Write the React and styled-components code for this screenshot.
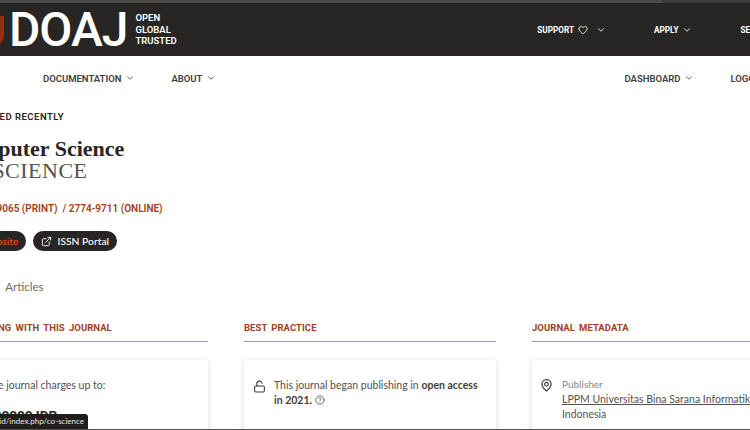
import React from "react";
import styled, { createGlobalStyle } from "styled-components";
import { ChevronDown, Clock, Coins, ExternalLink, Heart, LockOpen, CircleHelp } from "lucide-react";

const GlobalStyle = createGlobalStyle`
  html, body {
    margin: 0;
    height: 100%;
    overflow: hidden;
    background: #fff;
  }
  body {
    font-family: Lato, "Noto Sans", sans-serif;
    color: #282624;
  }
`;

const Screen = styled.div`
  position: relative;
  width: 750px;
  height: 430px;
  overflow: hidden;
  border-bottom: 1px solid #55524f;
  box-sizing: border-box;
`;

const Page = styled.div`
  width: 1000px;
  margin-left: -90px;
`;

const Strip = styled.div`
  height: 3px;
  background: linear-gradient(to right, #4c4a48 752px, #3b3937 752px);
`;

const TopBar = styled.header`
  height: 53px;
  background: #282624;
  display: flex;
  align-items: center;
  padding-left: 72px;
  color: #fff;
`;

const Shield = styled.span`
  width: 22px;
  height: 30px;
  margin-top: 2px;
  background: #982e0a;
  border-radius: 0 0 11px 11px;
  margin-right: 5px;
`;

const Wordmark = styled.span`
  font-family: Roboto, sans-serif;
  font-size: 48px;
  font-weight: 500;
  line-height: 1;
  letter-spacing: -1px;
`;

const Tagline = styled.span`
  margin-left: 8px;
  font-family: Roboto, sans-serif;
  font-size: 9.5px;
  font-weight: 600;
  line-height: 11.5px;
  white-space: pre-line;
`;

const TopLinks = styled.nav`
  margin-left: auto;
  display: flex;
  align-items: center;
  gap: 48px;
  margin-right: 138px;
`;

const TopLink = styled.span`
  display: flex;
  align-items: center;
  gap: 4px;
  font-family: Roboto, sans-serif;
  font-size: 8.2px;
  font-weight: 700;
`;

const TopChevron = styled(ChevronDown)`
  margin-left: ${(p) => p.$offset || 0}px;
`;

const MainNav = styled.nav`
  height: 44px;
  display: flex;
  align-items: center;
  padding-left: 133px;
  color: #3f3d3b;
`;

const NavLink = styled.span`
  display: flex;
  align-items: center;
  gap: 4px;
  font-family: Roboto, sans-serif;
  font-size: 9.5px;
  font-weight: 600;
  margin-right: ${(p) => p.$gap}px;
`;

const Intro = styled.section`
  padding: 11px 0 0 43px;
`;

const Updated = styled.div`
  display: flex;
  align-items: center;
  gap: 4px;
  font-family: Roboto, sans-serif;
  font-size: 9.5px;
  font-weight: 600;
  letter-spacing: 0.5px;
`;

const Title = styled.h1`
  margin: 16px 0 0;
  font-family: "Liberation Serif", serif;
  font-size: 22px;
  font-weight: 700;
  line-height: 22px;
`;

const Subtitle = styled.div`
  font-family: "Liberation Serif", serif;
  font-size: 22px;
  line-height: 22px;
  letter-spacing: 0.5px;
  color: #55524f;
`;

const Issn = styled.div`
  margin: 21px 0 0 17px;
  font-family: Roboto, sans-serif;
  font-size: 10px;
  font-weight: 600;
  color: #a0401c;
`;

const Buttons = styled.div`
  display: flex;
  gap: 7px;
  margin: 17px 0 0 4px;
`;

const Pill = styled.span`
  display: flex;
  align-items: center;
  gap: 5px;
  height: 20px;
  padding: 0 8px;
  border-radius: 10px;
  background: #282624;
  color: ${(p) => p.$color};
  font-size: 10.3px;
  font-weight: 500;
`;

const Tabs = styled.div`
  display: flex;
  gap: 21px;
  margin-top: 29px;
  font-size: 11.5px;
  color: #6e6b68;
`;

const Columns = styled.div`
  display: grid;
  grid-template-columns: repeat(3, 252px);
  gap: 36px;
  margin: 29px 0 0 3px;
`;

const SectionHead = styled.h2`
  margin: 0;
  padding-bottom: 8px;
  border-bottom: 1px solid #c98e78;
  font-family: Roboto, sans-serif;
  font-size: 9.5px;
  font-weight: 700;
  letter-spacing: 0.05px;
  word-spacing: 1.8px;
  color: #a0401c;
`;

const Card = styled.div`
  margin-top: 18px;
  height: 100px;
  padding: ${(p) => p.$top || 18}px 9px 0;
  border-radius: 3px;
  background: #fff;
  box-shadow: 0 1px 6px rgba(0, 0, 0, 0.14);
  display: flex;
  gap: 9px;
  font-size: 10.5px;
  line-height: 15px;
  color: #55524f;
`;

const Body = styled.div`
  strong {
    font-weight: 700;
    color: #3f3d3b;
  }
  svg {
    vertical-align: -1px;
  }
`;

const IconSlot = styled.span`
  width: 12px;
  flex: none;
  padding-top: 2px;
  color: #3f3d3b;
`;

const Label = styled.div`
  font-size: 10px;
  color: #8a8784;
`;

const Publisher = styled.span`
  display: block;
  white-space: nowrap;
  text-decoration: underline;
`;

const Price = styled.div`
  margin-top: 15px;
  font-family: Roboto, sans-serif;
  font-size: 13.5px;
  font-weight: 700;
  color: #282624;
`;

const StatusTip = styled.div`
  position: absolute;
  left: 0;
  bottom: 0;
  width: 88px;
  height: 15px;
  direction: rtl;
  overflow: hidden;
  padding-right: 4px;
  box-sizing: border-box;
  white-space: nowrap;
  background: #1f1e1d;
  border-radius: 0 3px 0 0;
  color: #e8e6e3;
  font-size: 8px;
  line-height: 15px;
`;

const PinIcon = () => (
  <svg width="11" height="13" viewBox="0 0 12 14" fill="none" stroke="currentColor" strokeWidth="1.3">
    <path d="M6 13C3 10.6 1 8.2 1 5.6a5 5 0 0 1 10 0C11 8.2 9 10.6 6 13Z" />
    <circle cx="6" cy="5.6" r="2" />
  </svg>
);

export default function App() {
  return (
    <>
      <GlobalStyle />
      <Screen>
        <Page>
          <Strip />
          <TopBar>
            <Shield />
            <Wordmark>DOAJ</Wordmark>
            <Tagline>{"OPEN\nGLOBAL\nTRUSTED"}</Tagline>
            <TopLinks>
              <TopLink>
                SUPPORT <Heart size={10} /> <TopChevron size={10} $offset={4} />
              </TopLink>
              <TopLink>
                APPLY <TopChevron size={10} />
              </TopLink>
              <TopLink>SEARCH</TopLink>
            </TopLinks>
          </TopBar>
          <MainNav>
            <NavLink $gap={36}>
              DOCUMENTATION <ChevronDown size={10} />
            </NavLink>
            <NavLink $gap={408}>
              ABOUT <ChevronDown size={10} />
            </NavLink>
            <NavLink $gap={36}>
              DASHBOARD <ChevronDown size={10} />
            </NavLink>
            <NavLink $gap={0}>LOGOUT</NavLink>
          </MainNav>
          <Intro>
            <Updated>
              <Clock size={10} /> UPDATED RECENTLY
            </Updated>
            <Title>Computer Science</Title>
            <Subtitle>CO-SCIENCE</Subtitle>
            <Issn>2774-9065 (PRINT)&nbsp; / 2774-9711 (ONLINE)</Issn>
            <Buttons>
              <Pill $color="#f04b23">
                <ExternalLink size={11} /> Website
              </Pill>
              <Pill $color="#fff">
                <ExternalLink size={11} /> ISSN Portal
              </Pill>
            </Buttons>
            <Tabs>
              <span>About</span>
              <span>Articles</span>
            </Tabs>
            <Columns>
              <div>
                <SectionHead>PUBLISHING WITH THIS JOURNAL</SectionHead>
                <Card>
                  <IconSlot>
                    <Coins size={12} />
                  </IconSlot>
                  <Body>
                    The journal charges up to:
                    <Price>500000 IDR</Price>
                  </Body>
                </Card>
              </div>
              <div>
                <SectionHead>BEST PRACTICE</SectionHead>
                <Card>
                  <IconSlot>
                    <LockOpen size={13} />
                  </IconSlot>
                  <Body>
                    This journal began publishing in <strong>open access in 2021.</strong>{" "}
                    <CircleHelp size={10} />
                  </Body>
                </Card>
              </div>
              <div>
                <SectionHead>JOURNAL METADATA</SectionHead>
                <Card $top={17}>
                  <IconSlot>
                    <PinIcon />
                  </IconSlot>
                  <Body>
                    <Label>Publisher</Label>
                    <Publisher>LPPM Universitas Bina Sarana Informatika</Publisher>
                    Indonesia
                  </Body>
                </Card>
              </div>
            </Columns>
          </Intro>
        </Page>
        <StatusTip>
          <bdi>https://ejournal.bsi.ac.id/index.php/co-science</bdi>
        </StatusTip>
      </Screen>
    </>
  );
}
